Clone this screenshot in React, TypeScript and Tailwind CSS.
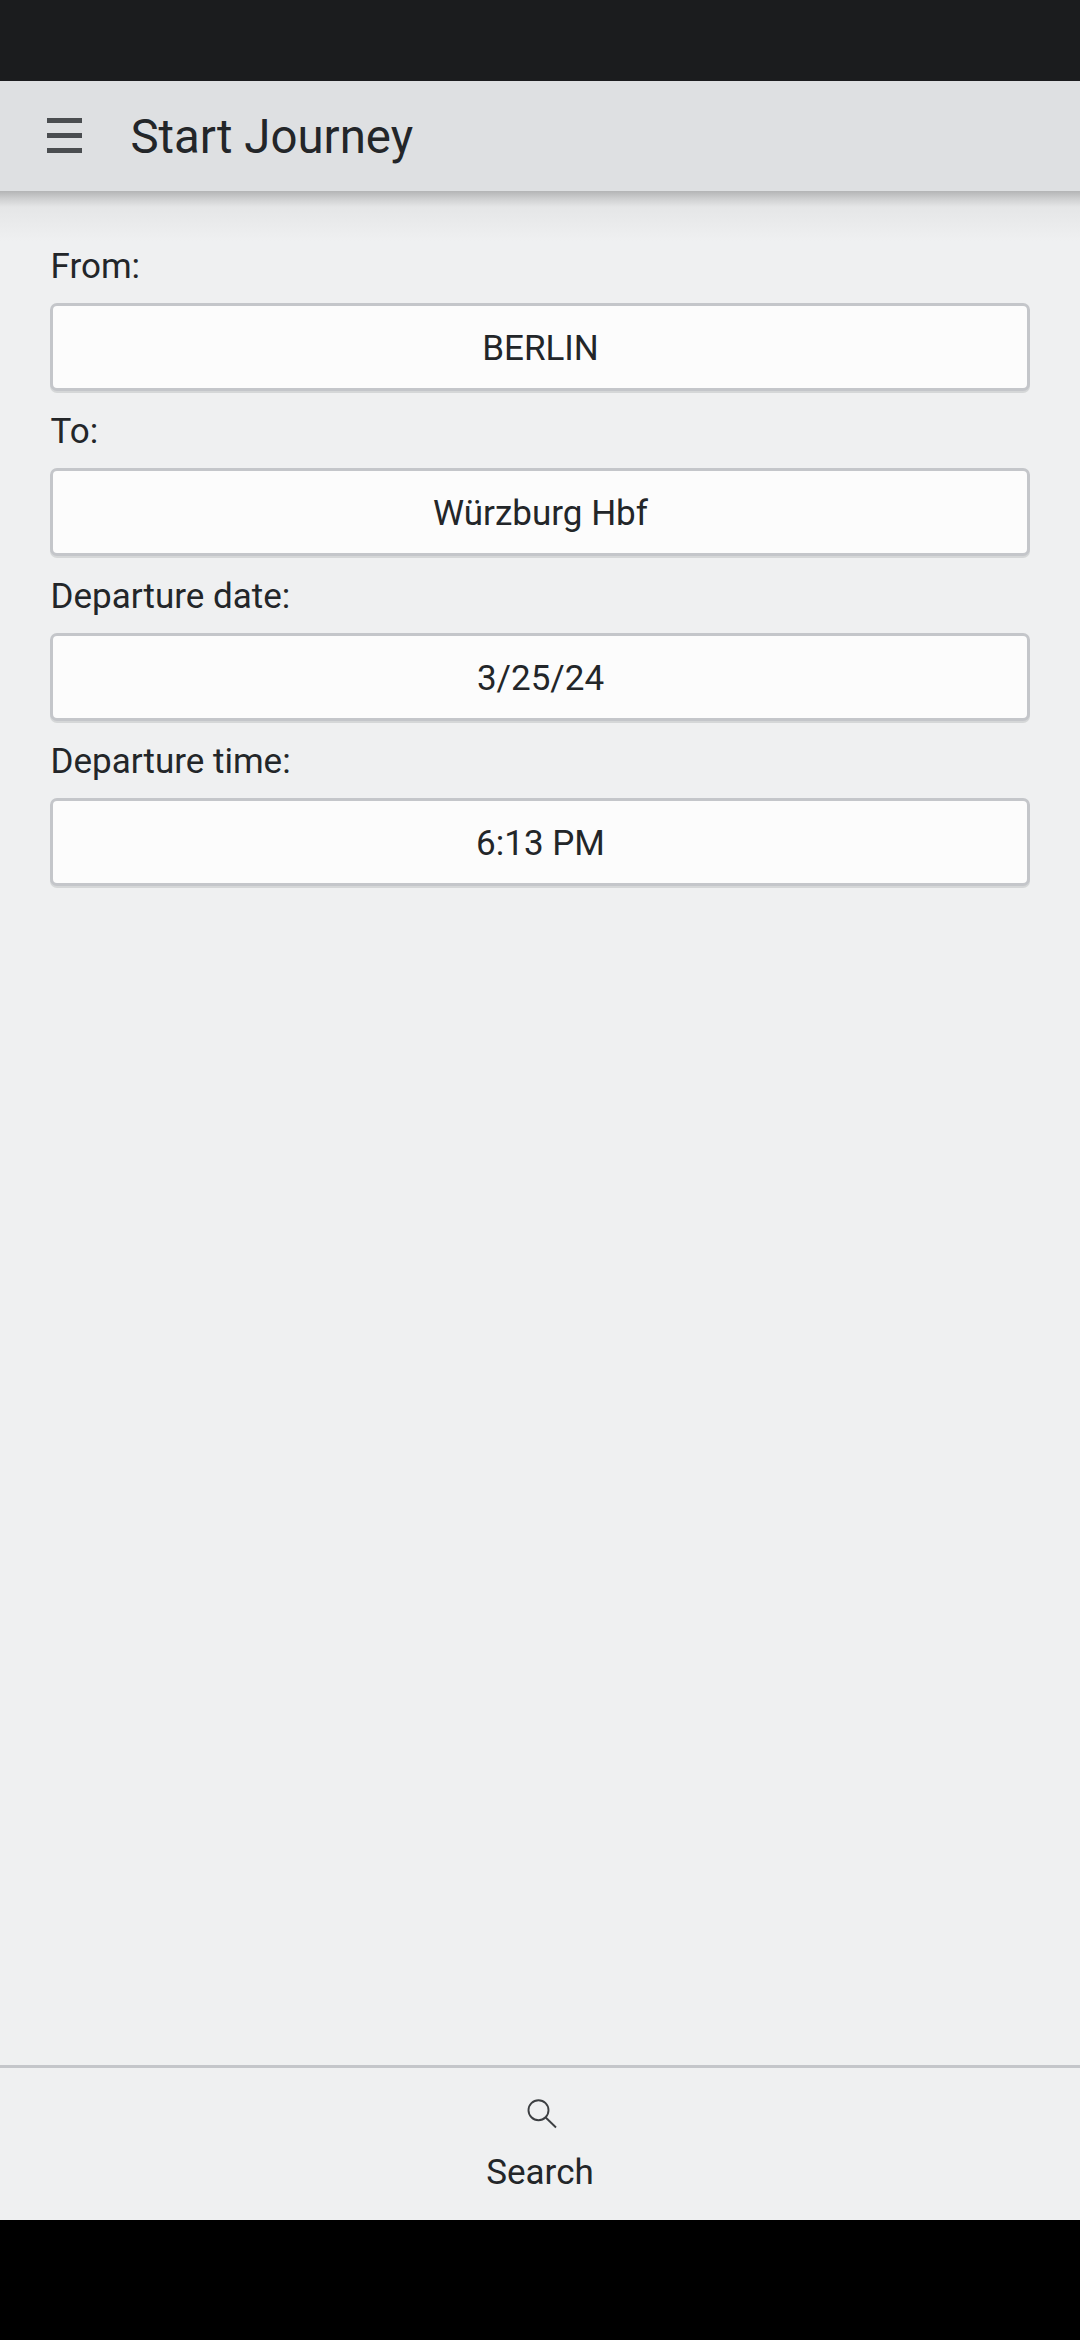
import React from "react";

const fields = [
  { label: "From:", value: "BERLIN" },
  { label: "To:", value: "Würzburg Hbf" },
  { label: "Departure date:", value: "3/25/24" },
  { label: "Departure time:", value: "6:13 PM" },
];

export default function App() {
  return (
    <div className="flex h-[2340px] w-[1080px] flex-col overflow-hidden bg-[#eff0f1] font-['Roboto',sans-serif] text-[#232629]">
      <div className="h-[81px] bg-[#1b1c1e]" />
      <header className="flex h-[110px] items-start bg-[#dee0e2] pl-[47px]">
        <svg className="mt-[37px]" width="35" height="35" viewBox="0 0 35 35" fill="#4a4d50">
          <path d="M0 0h35v5H0zM0 15h35v5H0zM0 30h35v5H0z" />
        </svg>
        <h1 className="ml-[48.4px] mt-[28px] text-[47.4px] leading-[56px]">Start Journey</h1>
      </header>
      <div className="h-[50px] bg-[linear-gradient(to_bottom,#b3b4b5_0px,#cfd0d1_8px,#e5e6e7_16px,#eff0f1_50px)]" />
      <main className="flex-1 px-[50px]">
        {fields.map((f) => (
          <div key={f.label} className="h-[165px]">
            <div className="h-[62px] pl-[0.5px] pt-[5px] text-[35px] leading-[41px]">{f.label}</div>
            <button className="flex h-[88px] w-full items-center justify-center rounded-[7px] border-[3px] border-[#c4c6ca] bg-[#fcfcfc] pl-[1px] pt-[3px] text-[35px] leading-[41px] shadow-[0_2px_0_#d5d7d8]">
              {f.value}
            </button>
          </div>
        ))}
      </main>
      <footer className="flex h-[155px] flex-col items-center border-t-[3px] border-[#c4c6ca] pt-[30px]">
        <svg className="ml-[4px]" width="32" height="32" viewBox="0 0 32 32" fill="none" stroke="#3c3f42" strokeWidth="1.9">
          <circle cx="12.5" cy="12.2" r="10" />
          <path d="M19.7 19.5L30 29.5" />
        </svg>
        <span className="mt-[22px] text-[35px] leading-[41px]">Search</span>
      </footer>
      <div className="h-[120px] bg-black" />
    </div>
  );
}
